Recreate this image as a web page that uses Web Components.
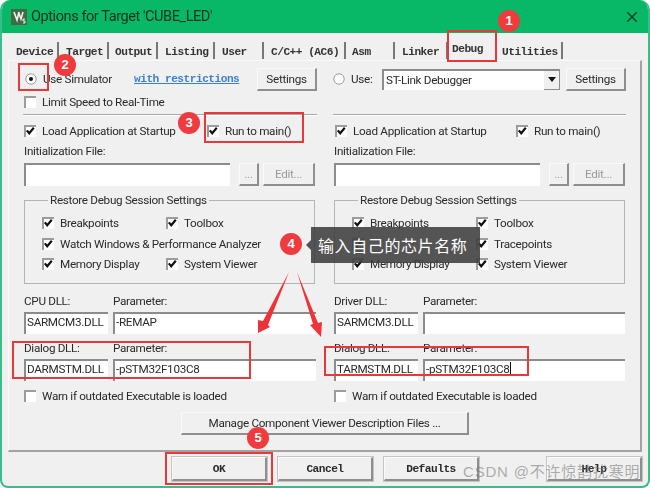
<!DOCTYPE html>
<html lang="zh">
<head>
<meta charset="utf-8">
<title>Options for Target</title>
<style>
  html, body { margin: 0; background: #fff; }
  body { width: 650px; height: 488px; overflow: hidden; font: 11.7px Roboto, "Liberation Sans", sans-serif; letter-spacing: -.3px; color: #2a2a2a; }
</style>
</head>
<body>
<options-dialog>
  <dlg-tabs slot="tabs"></dlg-tabs>

  <dlg-col slot="left">
    <div style="display:flex;align-items:center;height:22px;padding:0 0 2px 2px">
      <win-check radio checked style="width:109px">Use Simulator</win-check>
      <a style="font:bold 11.2px 'Liberation Mono',monospace;letter-spacing:-.52px;color:#3d7fd6;text-decoration:underline">with restrictions</a>
      <win-btn w="60" h="23" style="margin-left:auto">Settings</win-btn>
    </div>
    <win-check style="margin:3px 0 0 1px">Limit Speed to Real-Time</win-check>
    <hr-line></hr-line>
    <div style="display:flex;margin:8px 0 0 1px">
      <win-check checked style="width:183px">Load Application at Startup</win-check>
      <win-check checked>Run to main()</win-check>
    </div>
    <text-row style="margin:6px 0 0 1px">Initialization File:</text-row>
    <div style="display:flex;margin:5px 2px 0 1px;height:23px">
      <win-field style="flex:1"></win-field>
      <win-btn w="20" h="23" dim style="margin-left:9px">...</win-btn>
      <win-btn w="52" h="23" dim style="margin-left:4px">Edit...</win-btn>
    </div>
    <group-box title="Restore Debug Session Settings" style="margin:7px 2px 0 1px">
      <win-check checked>Breakpoints</win-check>
      <win-check checked>Toolbox</win-check>
      <win-check checked style="white-space:nowrap">Watch Windows &amp; Performance Analyzer</win-check>
      <span></span>
      <win-check checked>Memory Display</win-check>
      <win-check checked>System Viewer</win-check>
    </group-box>
    <dll-rows first="CPU DLL:" dll1="SARMCM3.DLL" par1="-REMAP" dll2="DARMSTM.DLL" par2="-pSTM32F103C8" style="margin-left:1px"></dll-rows>
    <win-check style="margin:8px 0 0 1px">Warn if outdated Executable is loaded</win-check>
  </dlg-col>

  <dlg-col slot="right">
    <div style="display:flex;align-items:center;height:22px;padding-bottom:2px">
      <win-check radio style="width:49px">Use:</win-check>
      <win-select style="width:178px">ST-Link Debugger</win-select>
      <win-btn w="60" h="23" style="margin-left:auto">Settings</win-btn>
    </div>
    <div style="height:17px"></div>
    <hr-line></hr-line>
    <div style="display:flex;margin:8px 0 0 2px">
      <win-check checked style="width:181px">Load Application at Startup</win-check>
      <win-check checked>Run to main()</win-check>
    </div>
    <text-row style="margin:6px 0 0 1px">Initialization File:</text-row>
    <div style="display:flex;margin:5px 1px 0 1px;height:23px">
      <win-field style="flex:1"></win-field>
      <win-btn w="20" h="23" dim style="margin-left:9px">...</win-btn>
      <win-btn w="52" h="23" dim style="margin-left:4px">Edit...</win-btn>
    </div>
    <group-box title="Restore Debug Session Settings" style="margin:7px 1px 0 1px">
      <win-check checked>Breakpoints</win-check>
      <win-check checked>Toolbox</win-check>
      <win-check checked></win-check>
      <win-check checked>Tracepoints</win-check>
      <win-check checked>Memory Display</win-check>
      <win-check checked>System Viewer</win-check>
    </group-box>
    <dll-rows first="Driver DLL:" dll1="SARMCM3.DLL" par1="" dll2="TARMSTM.DLL" par2="-pSTM32F103C8" caret style="margin-left:1px"></dll-rows>
    <win-check style="margin:8px 0 0 1px">Warn if outdated Executable is loaded</win-check>
  </dlg-col>

  <win-btn slot="manage" w="288" h="23">Manage Component Viewer Description Files ...</win-btn>

  <win-btn slot="foot" mono w="95" h="24" style="margin-left:170px">OK</win-btn>
  <win-btn slot="foot" mono w="95" h="24" style="margin-left:11px">Cancel</win-btn>
  <win-btn slot="foot" mono w="95" h="24" style="margin-left:11px">Defaults</win-btn>
  <win-btn slot="foot" mono w="95" h="24" style="margin-left:auto;margin-right:6px">Help</win-btn>
</options-dialog>
<anno-layer></anno-layer>

<script>
const tick = `<svg viewBox="0 0 12 12" width="12" height="12"><path d="M2.8 5.4 5.2 8.2 9.8 2.8" fill="none" stroke="#111" stroke-width="2.2"/></svg>`;

class OptionsDialog extends HTMLElement {
  constructor() {
    super();
    this.attachShadow({ mode: "open" }).innerHTML = `
      <style>
        :host { display: block; width: 650px; height: 488px; box-sizing: border-box; background: #f0f0f0;
          border: solid #36bf8b; border-width: 0 2px 2px; border-radius: 10px 10px 8px 8px; overflow: hidden; filter: blur(.35px); }
        .title { height: 33px; margin: 0 -2px; background: #08b866; display: flex; align-items: center; padding: 0 13px 0 11px; color: #10331f;
          font-size: 14.5px; letter-spacing: -.42px; }
        .title span { margin-left: 4px; flex: 1; }
        .panel { margin: 0 6px; height: 392px; box-sizing: border-box; border: solid; border-width: 1px 2px 2px 1px;
          border-color: #fbfbfb #a2a2a2 #a2a2a2 #fbfbfb; padding: 7px 12px 0 14px; }
        .cols { display: grid; grid-template-columns: 294px 293px; column-gap: 16px; }
        .manage { margin: 9px 0 0 158px; }
        .foot { display: flex; padding-top: 5px; }
      </style>
      <div class="title">
        <svg width="16" height="16" viewBox="0 0 16 16"><rect width="16" height="16" fill="#3f6b45"/><path d="M3 3 6 11 8 3M7.5 3 10 10 12 3" fill="none" stroke="#f2f2f2" stroke-width="1.6"/><path d="M14 10h-2v2h2v2h-2" fill="none" stroke="#f2f2f2"/></svg>
        <span>Options for Target 'CUBE_LED'</span>
        <svg width="10" height="10" viewBox="0 0 10 10"><path d="M0 0 10 10M10 0 0 10" stroke="#0c3a24" stroke-width="1.3"/></svg>
      </div>
      <slot name="tabs"></slot>
      <div class="panel">
        <div class="cols"><slot name="left"></slot><slot name="right"></slot></div>
        <div class="manage"><slot name="manage"></slot></div>
      </div>
      <div class="foot"><slot name="foot"></slot></div>`;
  }
}

class DlgTabs extends HTMLElement {
  constructor() {
    super();
    const tabs = [["Device", 47, 4], ["Target", 50, 7], ["Output", 49, 6], ["Listing", 57, 7], ["User", 49, 7], ["C/C++ (AC6)", 82, 7], ["Asm", 49, 6], ["Linker", 53, 7], ["Debug", 50, 4], ["Utilities", 65, 4]];
    const cells = tabs.map(([t, w, p]) => `<div class="${t == "Debug" ? "tab on" : "tab"}" style="width:${w}px;padding-left:${p}px">${t}</div>`).join("");
    this.attachShadow({ mode: "open" }).innerHTML = `
      <style>
        :host { display: flex; height: 27px; padding-left: 10px; align-items: flex-end; font: bold 11.2px "Liberation Mono", monospace; letter-spacing: -.52px; color: #333; }
        .tab { box-sizing: border-box; height: 17px; line-height: 20px; border-right: 2px solid #777; margin-bottom: 1px; white-space: nowrap; }
        .on { border-right: 0; height: 23px; line-height: 26px; }
      </style>${cells}`;
  }
}

class DlgCol extends HTMLElement {
  constructor() {
    super();
    this.attachShadow({ mode: "open" }).innerHTML = `<style>:host { display: flex; flex-direction: column; }</style><slot></slot>`;
  }
}

class HrLine extends HTMLElement {
  constructor() {
    super();
    this.attachShadow({ mode: "open" }).innerHTML = `<style>:host { display: block; height: 1px; margin-top: 5px; background: #a8a8a8; border-bottom: 1px solid #fff; }</style>`;
  }
}

class TextRow extends HTMLElement {
  constructor() {
    super();
    this.attachShadow({ mode: "open" }).innerHTML = `<style>:host { display: block; height: 14px; line-height: 14px; white-space: nowrap; }</style><slot></slot>`;
  }
}

class WinCheck extends HTMLElement {
  constructor() {
    super();
    this.attachShadow({ mode: "open" });
  }
  connectedCallback() {
    const on = this.hasAttribute("checked");
    const box = this.hasAttribute("radio")
      ? `<svg width="12" height="12" viewBox="0 0 12 12"><circle cx="6" cy="6" r="5.2" fill="#fff" stroke="#9a9a9a"/>${on ? '<circle cx="6" cy="6" r="2" fill="#111"/>' : ""}</svg>`
      : `<span class="box">${on ? tick : ""}</span>`;
    this.shadowRoot.innerHTML = `
      <style>
        :host { display: flex; align-items: center; gap: 6px; height: 14px; line-height: 14px; white-space: nowrap; }
        .box { box-sizing: border-box; width: 12px; height: 12px; background: #fff; border: solid; border-width: 2px 0 0 2px; border-color: #9c9c9c; flex: none; }
        .box svg { display: block; margin: -2px 0 0 -2px; }
      </style>${box}<span><slot></slot></span>`;
  }
}

class WinBtn extends HTMLElement {
  constructor() {
    super();
    this.attachShadow({ mode: "open" });
  }
  connectedCallback() {
    const mono = this.hasAttribute("mono");
    this.shadowRoot.innerHTML = `
      <style>
        :host { display: flex; align-items: center; justify-content: center; flex: none; box-sizing: border-box; white-space: nowrap;
          width: ${this.getAttribute("w")}px; height: ${this.getAttribute("h")}px; background: #f0f0f0;
          border: solid; border-width: 1px 2px 2px 1px; border-color: #fafafa #8e8e8e #8e8e8e #fafafa;
          color: ${this.hasAttribute("dim") ? "#9a9a9a" : "inherit"};
          ${mono ? "font: bold 11.2px 'Liberation Mono', monospace; letter-spacing: -.52px; outline: 1px solid #c4c4c4;" : ""} }
      </style><slot></slot>`;
  }
}

class WinField extends HTMLElement {
  constructor() {
    super();
    this.attachShadow({ mode: "open" }).innerHTML = `
      <style>
        :host { display: block; box-sizing: border-box; height: 100%; min-width: 0; background: #fff; border: solid; border-width: 2px 0 0 2px;
          border-color: #8c8c8c; padding: 0 0 0 1px; white-space: nowrap; overflow: hidden; line-height: 17px; }
      </style><slot></slot>`;
  }
}

class WinSelect extends HTMLElement {
  constructor() {
    super();
    this.attachShadow({ mode: "open" }).innerHTML = `
      <style>
        :host { display: flex; box-sizing: border-box; height: 21px; background: #fff; border: solid; border-width: 2px 0 0 2px; border-color: #8c8c8c;
          align-items: center; padding-left: 2px; }
        .t { flex: 1; }
        .a { width: 16px; height: 19px; background: #f0f0f0; border: solid; box-sizing: border-box; border-width: 0 1px 1px 0; border-color: #8e8e8e;
          display: flex; align-items: center; justify-content: center; }
      </style>
      <span class="t"><slot></slot></span>
      <span class="a"><svg width="8" height="5" viewBox="0 0 8 5"><path d="M0 0h8L4 5z" fill="#111"/></svg></span>`;
  }
}

class GroupBox extends HTMLElement {
  constructor() {
    super();
    this.attachShadow({ mode: "open" });
  }
  connectedCallback() {
    this.shadowRoot.innerHTML = `
      <style>
        :host { display: block; height: 91px; }
        fieldset { margin: 0; height: 91px; box-sizing: border-box; border: 1px solid #b4b4b4; padding: 9px 0 0 17px; min-width: 0; }
        legend { margin-left: 6px; padding: 0 2px; height: 14px; line-height: 14px; }
        .g { display: grid; grid-template-columns: 124px 1fr; grid-auto-rows: 20.5px; }
      </style>
      <fieldset><legend>${this.getAttribute("title")}</legend><div class="g"><slot></slot></div></fieldset>`;
  }
}

class DllRows extends HTMLElement {
  constructor() {
    super();
    this.attachShadow({ mode: "open" });
  }
  connectedCallback() {
    const a = (n) => this.getAttribute(n);
    const caret = this.hasAttribute("caret") ? '<i style="display:inline-block;width:1px;height:13px;background:#111;vertical-align:-2px"></i>' : "";
    this.shadowRoot.innerHTML = `
      <style>
        :host { display: grid; grid-template-columns: 84px 1fr; column-gap: 5px; margin-right: 1px; }
        text-row { margin-top: 10px; }
        text-row.b { margin-top: 7px; }
        win-field { height: 22px; margin-top: 4px; }
      </style>
      <text-row>${a("first")}</text-row><text-row>Parameter:</text-row>
      <win-field>${a("dll1")}</win-field><win-field>${a("par1")}</win-field>
      <text-row class="b">Dialog DLL:</text-row><text-row class="b">Parameter:</text-row>
      <win-field>${a("dll2")}</win-field><win-field>${a("par2")}${caret}</win-field>`;
  }
}

// red marks painted on top of the dialog, so these sit at free coordinates
class AnnoLayer extends HTMLElement {
  constructor() {
    super();
    const boxes = [[447, 30, 50, 32], [18, 63, 31, 28], [204, 112, 100, 31], [12, 341, 239, 38], [324, 346, 205, 30], [165, 452, 108, 33]];
    const nums = [[509, 21, 1], [65, 65, 2], [189, 123, 3], [291, 244, 4], [258, 438, 5]];
    this.attachShadow({ mode: "open" }).innerHTML = `
      <style>
        :host { position: absolute; left: 0; top: 0; width: 650px; height: 488px; pointer-events: none; letter-spacing: 0; }
        .b { position: absolute; box-sizing: border-box; border: 2px solid #e8383c; }
        .n { position: absolute; width: 22px; height: 22px; margin: -11px; border-radius: 50%; background: #ef3b3d; color: #fff;
          font: bold 13px/22px "Liberation Sans", sans-serif; text-align: center; }
        .tip { position: absolute; left: 311px; top: 227px; width: 169px; height: 36px; box-sizing: border-box; padding-left: 7px; background: rgba(62,62,62,.88); color: #fff;
          font: 16px/36px "Noto Sans CJK SC", sans-serif; white-space: nowrap; letter-spacing: .6px; }
        .tip:before { content: ""; position: absolute; left: -5px; top: 13px; border: 5px solid transparent; border-left: 0; border-right-color: rgba(62,62,62,.88); }
        .wm { position: absolute; left: 463px; top: 460px; font: 15px/24px "Liberation Sans", "Noto Sans CJK SC", sans-serif; letter-spacing: .8px; color: rgba(110,110,110,.55); white-space: nowrap; }
        svg { position: absolute; left: 0; top: 0; }
      </style>
      <svg width="650" height="488"><path d="M289 272 263 321 258 320 258 333 270 327 268 325zM297 272 318 323 322 322 321 337 310 325 313 324z" fill="#ee3338"/></svg>
      ${boxes.map(([x, y, w, h]) => `<div class="b" style="left:${x}px;top:${y}px;width:${w}px;height:${h}px"></div>`).join("")}
      ${nums.map(([x, y, t]) => `<div class="n" style="left:${x}px;top:${y}px">${t}</div>`).join("")}
      <div class="tip">输入自己的芯片名称</div>
      <div class="wm">CSDN @不许惊鹊扰寒明</div>`;
  }
}

customElements.define("options-dialog", OptionsDialog);
customElements.define("dlg-tabs", DlgTabs);
customElements.define("dlg-col", DlgCol);
customElements.define("hr-line", HrLine);
customElements.define("text-row", TextRow);
customElements.define("win-check", WinCheck);
customElements.define("win-btn", WinBtn);
customElements.define("win-field", WinField);
customElements.define("win-select", WinSelect);
customElements.define("group-box", GroupBox);
customElements.define("dll-rows", DllRows);
customElements.define("anno-layer", AnnoLayer);
</script>
</body>
</html>
